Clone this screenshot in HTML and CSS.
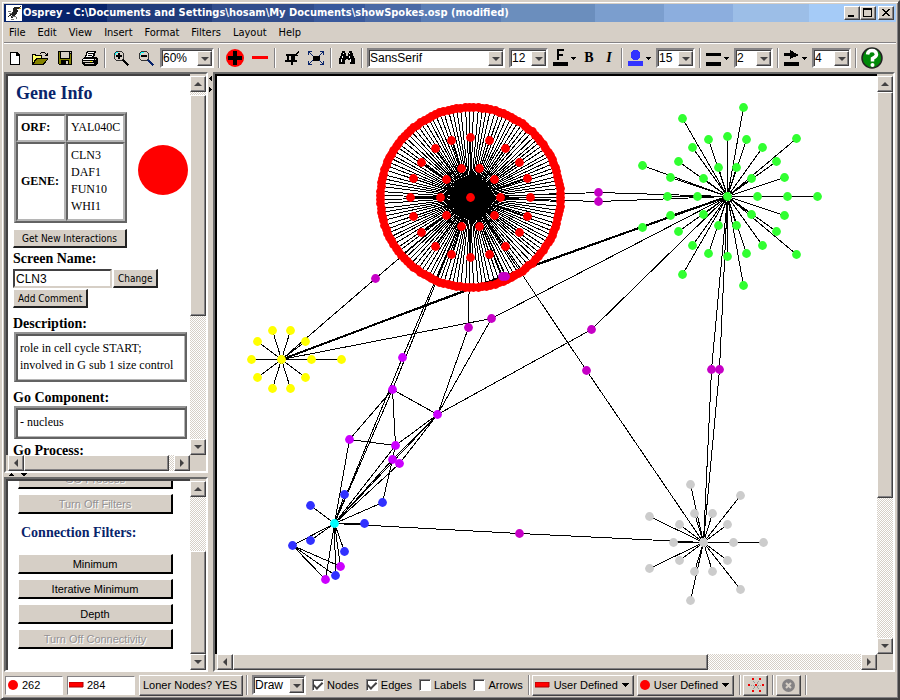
FILE: index.html
```html
<!DOCTYPE html>
<html lang="en">
<head>
<meta charset="utf-8">
<title>Osprey</title>
<link rel="stylesheet" href="styles.css">
</head>
<body>
<div class="window">
  <header class="titlebar">
    <svg class="app-icon" width="16" height="16" viewBox="0 0 16 16" shape-rendering="crispEdges" aria-hidden="true"><path fill="#fff" d="M0 0h16v16H0z"/><path fill="#222" d="M8 2h4l3-1v1l-3 2h-1l1 2-2 4-2 1-1 2H5v-1l1-2-2 1-2 1v-1l3-3 2-1V4z"/><path fill="#777" d="M2 6h3v1H2zM3 8h3v1H3zM6 11h4v1H6zM5 14h3v1H5zM10 12h1v2h-1z"/><path fill="#c90" d="M13 3h2v1h-2z"/></svg>
    <h1>Osprey - C:\Documents and Settings\hosam\My Documents\showSpokes.osp (modified)</h1>
    <div class="window-controls">
      <button type="button" aria-label="Minimize"><svg width="12" height="10" shape-rendering="crispEdges"><path d="M2 7h6v2H2z"/></svg></button>
      <button type="button" aria-label="Maximize"><svg width="12" height="10" shape-rendering="crispEdges"><path fill-rule="evenodd" d="M1 0h9v9H1zM2 2v6h7V2z"/></svg></button>
      <button type="button" aria-label="Close" class="close"><svg width="12" height="10" shape-rendering="crispEdges"><path d="M2 1h2v1h1v1h2V2h1V1h2v1H9v1H8v1H7v1h1v1h1v1h1v1H8V7H7V6H5v1H4v1H2V7h1V6h1V5h1V4H4V3H3V2H2z"/></svg></button>
    </div>
  </header>

  <nav class="menubar">
    <a href="#">File</a><a href="#">Edit</a><a href="#">View</a><a href="#">Insert</a><a href="#">Format</a><a href="#">Filters</a><a href="#">Layout</a><a href="#">Help</a>
  </nav>

  <div class="toolbar">
    <button type="button" class="tool" aria-label="New"><svg width="16" height="16" shape-rendering="crispEdges"><path d="M3 2h7l3 3v10H3z" fill="#000"/><path d="M4 3h5v3h3v8H4z" fill="#fff"/></svg></button>
    <button type="button" class="tool" aria-label="Open"><svg width="16" height="16" shape-rendering="crispEdges"><path d="M9 2h4v1H9zM8 3h1v1H8zM13 3h1v1h1V3h1v3h-3V5h1V4h-1zM0 4h4v1h6v3h6v1l-4 6H0z"/><path fill="#ff6" d="M1 5h2v1h6v2H4l-3 5z"/><path fill="#848200" d="M5 9h10l-4 5H2z"/></svg></button>
    <button type="button" class="tool" aria-label="Save"><svg width="16" height="16" shape-rendering="crispEdges"><path d="M1 1h14v14H2l-1-1z"/><path fill="#848200" d="M2 2h1v7h10V4h1v10h-2v-4H4v4H2z"/><path fill="#d6cfc6" d="M4 2h8v6H4zM13 2h1v1h-1zM9 11h2v3H9z"/></svg></button>
    <button type="button" class="tool" aria-label="Print"><svg width="16" height="16" shape-rendering="crispEdges"><path d="M5 1h9v1l-2 5h2l2 2v4l-3 3H2l-2-3V9l3-2z"/><path fill="#fff" d="M6 2h6l-2 5H4zM1 9h11v1H1z"/><path fill="#000" d="M6 3h5v1H6zM6 5h4v1H6z"/><path fill="#d6cfc6" d="M1 11h10v1H1zM3 13h9v1H3zM13 9h1v1h-1z"/><path fill="#ff0" d="M8 11h2v1H8z"/></svg></button>
    <span class="sep"></span>
    <button type="button" class="tool" aria-label="Zoom in"><svg width="16" height="16" shape-rendering="crispEdges"><circle cx="6" cy="6" r="5" fill="#d6cfc6" stroke="#333" stroke-width="1"/><path d="M5 3h2v2h2v2H7v2H5V7H3V5h2z"/><path d="M10 9l6 5-2 2-5-6z"/><path fill="#0ff" d="M3 2h2v1H3zM2 3h1v2H2z"/></svg></button>
    <button type="button" class="tool" aria-label="Zoom out"><svg width="16" height="16" shape-rendering="crispEdges"><circle cx="6" cy="6" r="5" fill="#d6cfc6" stroke="#333" stroke-width="1"/><path d="M3 5h6v2H3z"/><path fill="#08246b" d="M10 9l6 5-2 2-5-6z"/><path fill="#0ff" d="M3 2h3v1H3zM2 3h1v2H2z"/></svg></button>
    <span class="combo combo-zoom"><select aria-label="Zoom level"><option>60%</option></select><i></i></span>
    <span class="sep"></span>
    <button type="button" class="tool" aria-label="Add"><svg width="18" height="18"><circle cx="9" cy="9" r="9" fill="#f00"/><path d="M7 2h4v5h5v4h-5v5H7v-5H2V7h5z"/></svg></button>
    <button type="button" class="tool" aria-label="Remove"><svg width="16" height="16"><path fill="#f00" d="M0 6h16v3H0z"/></svg></button>
    <span class="sep"></span>
    <button type="button" class="tool" aria-label="Crop"><svg width="16" height="16" shape-rendering="crispEdges"><path d="M4 4h8l3-3 1 1-3 3h2v1h-3v4h2v2h-4v3H8v-3H2v-2h2V6H3V4zM6 6v4h2V6z" fill-rule="evenodd"/></svg></button>
    <button type="button" class="tool" aria-label="Fit to window"><svg width="16" height="16" shape-rendering="crispEdges"><path d="M5 6h7v5H5z"/><path fill="#08246b" d="M0 1h4v1H2v1h1v1h1v1h1v1H4V5H3V4H2V3H1v2H0zM16 1h-4v1h2v1h-1v1h-1v1h-1v1h1V5h1V4h1V3h1v2h1zM0 15h4v-1H2v-1h1v-1h1v-1h1v-1H4v1H3v1H2v1H1v-2H0zM16 15h-4v-1h2v-1h-1v-1h-1v-1h-1v-1h1v1h1v1h1v1h1v-2h1z"/></svg></button>
    <span class="sep"></span>
    <button type="button" class="tool" aria-label="Find"><svg width="16" height="16" shape-rendering="crispEdges"><path d="M3 1h3v2h1v3h2V3h1V1h3v2h1v3h1v2h1v6h-5v-4H9V9H7v1H6v4H0V8h1V6h1V3h1z"/><path fill="#fff" d="M4 3h1v1H4zM3 6h1v2H3zM2 9h1v3H2zM10 3h1v1h-1zM10 6h1v2h-1zM11 9h1v3h-1z"/></svg></button>
    <span class="sep"></span>
    <span class="combo combo-font"><select aria-label="Font"><option>SansSerif</option></select><i></i></span>
    <span class="combo combo-size"><select aria-label="Font size"><option>12</option></select><i></i></span>
    <button type="button" class="tool drop" aria-label="Font colour"><svg width="24" height="18" shape-rendering="crispEdges"><path d="M4 0h7v2H6v3h4v2H6v4H4zM0 13h15v4H0zM18 8h5v1h-1v1h-1v1h-1v-1h-1V9h-1z"/></svg></button>
    <button type="button" class="tool letter bold">B</button>
    <button type="button" class="tool letter italic">I</button>
    <span class="sep"></span>
    <button type="button" class="tool drop" aria-label="Node colour"><svg width="24" height="18" shape-rendering="crispEdges"><circle cx="7.5" cy="6" r="5" fill="#33f"/><path fill="#33f" d="M0 12h15v5H0z"/><path d="M18 8h5v1h-1v1h-1v1h-1v-1h-1V9h-1z"/></svg></button>
    <span class="combo combo-size"><select aria-label="Node size"><option>15</option></select><i></i></span>
    <span class="sep"></span>
    <button type="button" class="tool drop" aria-label="Edge colour"><svg width="24" height="18" shape-rendering="crispEdges"><path d="M0 4h15v3H0zM0 13h15v4H0zM18 8h5v1h-1v1h-1v1h-1v-1h-1V9h-1z"/></svg></button>
    <span class="combo combo-size"><select aria-label="Edge width"><option>2</option></select><i></i></span>
    <span class="sep"></span>
    <button type="button" class="tool drop" aria-label="Arrow colour"><svg width="24" height="18" shape-rendering="crispEdges"><path d="M0 4h6V1l9 5-9 4V7H0zM0 13h15v4H0zM18 8h5v1h-1v1h-1v1h-1v-1h-1V9h-1z"/></svg></button>
    <span class="combo combo-size"><select aria-label="Arrow size"><option>4</option></select><i></i></span>
    <span class="sep"></span>
    <button type="button" class="tool" aria-label="Help"><svg width="22" height="22"><circle cx="11" cy="11" r="10" fill="#008a08" stroke="#222" stroke-width="1.5"/><path d="M6.500 7.500Q7 3.500 11 3.500T15.500 7.500Q15.500 9.500 11.500 11.500V14.500" fill="none" stroke="#fff" stroke-width="3.500"/><circle cx="11.500" cy="18" r="2" fill="#fff"/></svg></button>
  </div>

  <main class="workspace">
    <div class="sidebar">
      <section class="panel split-both">
        <div class="view gene">
          <h2>Gene Info</h2>
          <div class="gene-row">
            <table>
              <tr><th scope="row">ORF:</th><td>YAL040C</td></tr>
              <tr><th scope="row">GENE:</th><td>CLN3<br>DAF1<br>FUN10<br>WHI1</td></tr>
            </table>
            <svg width="50" height="50"><circle cx="25" cy="25" r="25" fill="#f00"/></svg>
          </div>
          <button type="button" class="form-button wide">Get New Interactions</button>
          <label class="caption" for="screen-name">Screen Name:</label>
          <div class="name-row"><input id="screen-name" type="text" value="CLN3"><button type="button" class="form-button">Change</button></div>
          <button type="button" class="form-button">Add Comment</button>
          <h3>Description:</h3>
          <p class="framed">role in cell cycle START; involved in G sub 1 size control</p>
          <h3>Go Component:</h3>
          <p class="framed">- nucleus</p>
          <h3 class="last">Go Process:</h3>
        </div>
        <div class="scroll vertical"><b class="up"></b><span class="track t-gene-a"></span><span class="thumb t-gene-b"></span><span class="track t-gene-c"></span><b class="down"></b></div>
        <div class="scroll horizontal"><b class="left"></b><span class="thumb t-geneh-a"></span><span class="track t-geneh-b"></span><b class="right"></b></div>
      </section>
      <div class="divider-h"><svg width="24" height="4" shape-rendering="crispEdges"><path d="M6 0h1v1h1v1h1v1H4V2h1V1h1zM16 0h6v1h-1v1h-1v1h-2V2h-1V1h-1z"/></svg></div>
      <section class="panel">
        <div class="view filters">
          <button type="button" disabled>GO Process</button>
          <button type="button" disabled>Turn Off Filters</button>
          <h3>Connection Filters:</h3>
          <button type="button">Minimum</button>
          <button type="button">Iterative Minimum</button>
          <button type="button">Depth</button>
          <button type="button" disabled>Turn Off Connectivity</button>
        </div>
        <div class="scroll vertical"><b class="up"></b><span class="track t-filt-a"></span><span class="thumb t-filt-b"></span><b class="down"></b></div>
      </section>
    </div>
    <div class="divider-v"><svg width="5" height="24" shape-rendering="crispEdges"><path d="M4 4v5H3V8H2V7H1V6h1V5h1V4zM1 15h1v1h1v1h1v1H3v1H2v1H1z"/></svg></div>
    <section class="panel split-both network">
      <div class="view"><svg id="graph" role="img" aria-label="Gene interaction network"></svg></div>
      <div class="scroll vertical"><b class="up"></b><span class="thumb t-net-a"></span><span class="track t-net-b"></span><b class="down"></b></div>
      <div class="scroll horizontal"><b class="left"></b><span class="thumb t-neth-a"></span><span class="track t-neth-b"></span><b class="right"></b></div>
    </section>
  </main>

  <footer class="statusbar">
    <output class="count count-nodes"><svg width="12" height="10"><circle cx="6" cy="5" r="5" fill="#f00"/></svg>262</output>
    <output class="count count-edges"><svg width="15" height="6"><path fill="#f00" stroke="#a00" d="M0 0h14v5H0z"/></svg>284</output>
    <button type="button" class="push loner">Loner Nodes? YES</button>
    <span class="sep"></span>
    <span class="combo combo-draw"><select aria-label="Draw mode"><option>Draw</option></select><i></i></span>
    <label class="check"><input type="checkbox" checked>Nodes</label>
    <label class="check"><input type="checkbox" checked>Edges</label>
    <label class="check"><input type="checkbox">Labels</label>
    <label class="check"><input type="checkbox">Arrows</label>
    <span class="sep"></span>
    <button type="button" class="push"><svg width="15" height="6"><path fill="#f00" stroke="#a00" d="M0 0h14v5H0z"/></svg>User Defined<svg width="7" height="4" shape-rendering="crispEdges"><path d="M0 0h7L4 4H3z"/></svg></button>
    <button type="button" class="push"><svg width="10" height="10"><circle cx="5" cy="5" r="5" fill="#f00"/></svg>User Defined<svg width="7" height="4" shape-rendering="crispEdges"><path d="M0 0h7L4 4H3z"/></svg></button>
    <span class="sep"></span>
    <button type="button" class="push square" aria-label="Layout"><svg width="16" height="14" shape-rendering="crispEdges"><path stroke="#999" stroke-dasharray="1 1" d="M8 7L5 2M8 7l4-5M8 7H2M8 7h6M8 7l-4 5M8 7l4 5"/><path fill="#e00" d="M4 0h2v2H4zM11 0h2v2h-2zM0 6h2v2H0zM7 6h2v2H7zM14 6h2v2h-2zM4 12h2v2H4zM11 12h2v2h-2z"/></svg></button>
    <span class="sep"></span>
    <button type="button" class="push square" aria-label="Stop" disabled><svg width="13" height="13"><circle cx="6.500" cy="6.500" r="6.500" fill="#848284"/><path stroke="#d6cfc6" stroke-width="2" d="M4 4l5 5M9 4l-5 5"/></svg></button>
    <span class="sep"></span>
  </footer>
</div>
<script src="graph.js"></script>
</body>
</html>
```
FILE: styles.css
```css
:root {
  --face: #d6cfc6;
  --shade: #848284;
  --dark: #424142;
  --navy: #08246b;
  --ui: "Liberation Sans", Arial, sans-serif;
  --menu: "DejaVu Sans Condensed", "Noto Sans", sans-serif;
}

* { box-sizing: border-box; }

body {
  margin: 0;
  background: var(--face);
  color: #000;
  font: 11px/14px var(--ui);
}

button, select, input { font: inherit; color: inherit; border-radius: 0; margin: 0; padding: 0; }
h1, h2, h3, p { margin: 0; }
svg { display: block; flex: none; }

.window {
  display: flex;
  flex-direction: column;
  height: 100vh;
  min-height: 480px;
  padding: 2px 2px 0;
  background: var(--face);
  border: solid;
  border-width: 2px;
  border-color: var(--face) var(--dark) var(--dark) var(--face);
  box-shadow: inset 1px 1px #fff, inset -1px -1px var(--shade);
}

/* Title bar */
.titlebar {
  display: flex;
  align-items: center;
  flex: none;
  height: 18px;
  padding: 0 2px;
  background: linear-gradient(90deg, #08246b 0 11.500%, #213c7b 0 23.300%, #314d8c 0 34.700%, #39599c 0 40.500%, #4a69a5 0 46.800%, #5a7db5 0 55.700%, #6b8ebd 0 66.300%, #7b9ece 0 74%, #8caede 0 81.700%, #9cbee7 0 90.300%, #a5cbf7 0);
  color: #fff;
}
.titlebar h1 { flex: 1; margin-left: 1px; font: bold 11px/18px var(--menu); white-space: nowrap; overflow: hidden; }
.window-controls { display: flex; }
.window-controls button { width: 16px; height: 14px; display: grid; place-items: center; }
.window-controls .close { margin-left: 2px; }

.window-controls button, .push, .scroll b, .thumb, .combo i {
  background: var(--face);
  border: 1px solid;
  border-color: #fff var(--dark) var(--dark) #fff;
  box-shadow: inset -1px -1px var(--shade);
  color: #000;
}

/* Menu */
.menubar {
  display: flex;
  align-items: center;
  flex: none;
  gap: 12px;
  height: 22px;
  padding: 0 5px;
  border-bottom: 1px solid #fff;
  box-shadow: inset 0 -1px var(--shade);
  font: 11px/20px var(--menu);
}
.menubar a { color: #000; text-decoration: none; }

/* Toolbar */
.toolbar { display: flex; align-items: center; flex: none; height: 28px; margin-left: -2px; }
.tool { flex: none; display: grid; place-items: center; width: 25px; height: 24px; border: 0; background: none; }
.tool.drop { width: 29px; }
.tool.letter { width: 20px; font: bold 14px/20px "Liberation Serif", serif; }
.tool.italic { font-style: italic; }
.sep { flex: none; width: 2px; height: 20px; margin: 0 2px; background: var(--shade); border-right: 1px solid #fff; }

.combo {
  flex: none;
  display: grid;
  grid-template: 1fr / 1fr;
  height: 20px;
  margin: 0 2px;
  background: #fff;
  border: 2px solid;
  border-color: var(--shade) #fff #fff var(--shade);
  box-shadow: inset 1px 1px var(--dark);
}
.combo select { grid-area: 1 / 1; width: 100%; padding-left: 1px; appearance: none; background: none; border: 0; outline: 0; font: 12px/16px var(--ui); }
.combo i { grid-area: 1 / 1; justify-self: end; width: 15px; margin: 1px 0 0; pointer-events: none; display: grid; place-items: center; }
.combo i::before { content: ""; border: 4px solid transparent; border-top-color: var(--dark); border-bottom: 0; }
.combo-zoom { width: 54px; }
.combo-font { width: 138px; }
.combo-size { width: 39px; }
.combo-draw { width: 54px; }

/* Workspace */
.workspace { flex: 1; min-height: 0; display: flex; }
.sidebar { flex: none; width: 204px; display: grid; grid-template-rows: minmax(0, 401fr) 4px minmax(0, 195fr); }
.divider-v { flex: none; width: 5px; }
.divider-h { padding-left: 1px; }

.panel {
  display: grid;
  grid-template: minmax(0, 1fr) / minmax(0, 1fr) 16px;
  min-height: 0;
  border: 2px solid;
  border-color: #6b6b6b #fff #fff #6b6b6b;
}
.panel.split-both { grid-template-rows: minmax(0, 1fr) 16px; }
.view { overflow: hidden; background: #fff; }
.panel > .view { border: 2px solid var(--dark); border-width: 2px 0 0 2px; }
.network { flex: 1; min-width: 0; margin-right: 1px; }
.network > .view { border-color: #000; }
#graph { width: 100%; height: 100%; }

/* Scroll bars */
.scroll { display: flex; min-width: 0; min-height: 0; }
.vertical { flex-direction: column; padding-top: 2px; }
.horizontal { padding-left: 2px; }
.scroll b { flex: none; width: 16px; height: 16px; display: grid; place-items: center; }
.scroll b::before { content: ""; border: 4px solid transparent; }
.scroll .up::before { border-top: 0; border-bottom-color: var(--dark); }
.scroll .down::before { border-bottom: 0; border-top-color: var(--dark); }
.scroll .left::before { border-left: 0; border-right-color: var(--dark); }
.scroll .right::before { border-right: 0; border-left-color: var(--dark); }
.track { background: conic-gradient(#fff 25%, var(--face) 0 50%, #fff 0 75%, var(--face) 0) 0 0 / 2px 2px; }
.t-gene-a { flex: 3; }
.t-gene-b { flex: 220; }
.t-gene-c { flex: 124; }
.t-geneh-a { flex: 145; }
.t-geneh-b { flex: 5; }
.t-filt-a { flex: 55; }
.t-filt-b { flex: 102; }
.t-net-a { flex: 405; }
.t-net-b { flex: 141; }
.t-neth-a { flex: 475; }
.t-neth-b { flex: 154; }

/* Gene details */
.gene { padding: 7px 0 0 5px; font: 12px/18px "Liberation Serif", "Times New Roman", serif; }
.gene h2 { margin-left: 3px; color: var(--navy); font-size: 18px; line-height: 20px; }
.gene-row { display: flex; align-items: center; gap: 11px; margin: 9px 0 6px 1px; }
.gene-row svg { margin-top: 4px; }
.gene table { border: 2px solid; border-color: #a5a5a5 #636363 #636363 #a5a5a5; border-spacing: 0; }
.gene th, .gene td { padding: 3px 3px 4px; border: 2px solid; border-color: #636363 #b5b5b5 #b5b5b5 #636363; text-align: left; line-height: 17px; }
.gene th { padding-right: 5px; font-size: 12px; }
.gene h3, .caption { display: block; font-size: 14px; font-weight: bold; line-height: 17px; }
.caption { margin: 2px 0; }
.gene h3 { margin-top: 7px; }
.gene h3.last { margin-top: 3px; }
.form-button {
  display: block;
  height: 19px;
  padding: 0 4px;
  border: solid;
  border-width: 1px 2px 2px 1px;
  border-color: #fff #222 #222 #fff;
  background: var(--face);
  font: 10px/15px var(--menu);
}
.form-button.wide { padding: 0 8px; }
.name-row { display: flex; gap: 1px; align-items: center; margin-bottom: 1px; }
.name-row input { width: 99px; height: 19px; padding: 0 1px; border: 2px solid; border-color: var(--dark) var(--face) var(--face) var(--dark); background: #fff; font: 12px/15px var(--ui); }
.framed { width: 173px; margin-left: 1px; padding: 6px 2px 6px 4px; border: 2px solid; border-color: #949494 #636363 #636363 #949494; box-shadow: inset 2px 2px #5a5a5a, inset -1px -1px #b5b5b5; line-height: 17px; }

/* Filters */
.filters { display: flex; flex-direction: column; justify-content: flex-end; gap: 5px; padding: 0 17px 21px 10px; }
.filters button {
  flex: none;
  height: 20px;
  border: solid;
  border-width: 1px 2px 2px 1px;
  border-color: #fff #000 #000 #fff;
  background: var(--face);
  font: 11px/16px var(--ui);
}
.filters button:disabled { color: #949294; text-shadow: 1px 1px #fff; }
.filters h3 { margin: 4px 0 6px 3px; color: var(--navy); font: bold 14px/20px "Liberation Serif", serif; }

/* Status bar */
.statusbar { display: flex; align-items: center; flex: none; height: 26px; padding-left: 1px; }
.count { display: flex; align-items: center; gap: 3px; height: 19px; margin-right: 4px; padding-left: 1px; background: #fff; border: 1px solid; border-color: var(--shade) #fff #fff var(--shade); }
.count-nodes { width: 58px; }
.count-edges { width: 68px; }
.push { flex: none; display: flex; align-items: center; justify-content: center; gap: 4px; height: 21px; margin-right: 3px; padding: 0 4px 0 2px; }
.push.loner { width: 104px; margin-right: 1px; }
.push.square { width: 25px; padding: 0; margin-right: 2px; }
.check { display: flex; align-items: center; gap: 3px; margin: 0 3px 0 4px; }
.check input { width: 12px; height: 12px; appearance: none; display: grid; place-items: center; background: #fff; border: 1px solid; border-color: var(--shade) #fff #fff var(--shade); box-shadow: inset 1px 1px var(--dark); }
.check input:checked::before { content: ""; width: 4px; height: 7px; border: solid var(--dark); border-width: 0 2px 2px 0; transform: rotate(45deg); margin-bottom: 2px; }
```
FILE: graph.js
```js
const NS = "http://www.w3.org/2000/svg";
const svg = document.getElementById("graph");
const layer = document.createElementNS(NS, "g");
layer.setAttribute("transform", "translate(-216.5 -75.5)");
svg.append(layer);

const colours = { red: "#ff0000", green: "#31ff31", yellow: "#ffff00", grey: "#cccccc", blue: "#3131ff", cyan: "#00ffff", magenta: "#cc00ff", plum: "#c600c6" };

function line(a, b, width = 1) {
  const el = document.createElementNS(NS, "path");
  el.setAttribute("d", `M${a[0]} ${a[1]}L${b[0]} ${b[1]}`);
  el.setAttribute("stroke", "#000");
  el.setAttribute("stroke-width", width);
  el.setAttribute("shape-rendering", "crispEdges");
  layer.append(el);
}

function node(p, colour) {
  const el = document.createElementNS(NS, "circle");
  el.setAttribute("cx", p[0]);
  el.setAttribute("cy", p[1]);
  el.setAttribute("r", 4.4);
  el.setAttribute("fill", colours[colour]);
  layer.append(el);
}

// Nodes evenly spaced on a circle around a hub.
function ring(hub, radius, count) {
  return Array.from({ length: count }, (_, i) => {
    const t = (i * 2 * Math.PI) / count;
    return [Math.round(hub[0] + radius * Math.cos(t)), Math.round(hub[1] - radius * Math.sin(t))];
  });
}

const R = [470, 197], G = [727, 196], Y = [281, 359], B = [334, 523], W = [703, 542];
const hubs = [
  { at: R, colour: "red", nodes: [...ring(R, 90, 131), ...ring(R, 60, 20), ...ring(R, 30, 10)] },
  { at: G, colour: "green", nodes: [...ring(G, 90, 9), ...ring(G, 60, 20), ...ring(G, 30, 10)] },
  { at: Y, colour: "yellow", nodes: [...ring(Y, 30, 10), [341, 359]] },
  { at: W, colour: "grey", nodes: [...ring(W, 60, 7), ...ring(W, 30, 10)] },
  { at: B, colour: "blue", nodes: [[310, 505], [344, 494], [382, 502], [364, 523], [310, 540], [292, 545], [344, 551], [335, 575]] },
];

const n = {
  a: [375, 278], b: [598, 192], c: [598, 201], d: [468, 327], e: [491, 318], f: [402, 357],
  g: [392, 389], h: [437, 414], i: [349, 439], j: [395, 445], k: [392, 459], l: [399, 463],
  m: [340, 566], o: [325, 579], p: [591, 329], q: [586, 370], r: [711, 369], s: [719, 369],
  t: [519, 533], u: [502, 276], v: [505, 276],
};
const links = [
  [R, n.a], [n.a, Y], [R, n.b], [n.b, G], [R, n.c], [n.c, G], [R, n.d], [n.d, n.h],
  [G, n.e], [n.e, Y], [n.e, n.h], [R, n.f], [n.f, B], [R, n.g], [n.g, B], [n.g, n.h],
  [n.g, n.i], [n.g, n.j], [n.i, n.j], [n.i, B], [n.j, n.h], [n.j, B], [n.j, n.k],
  [n.k, n.h], [n.k, B], [n.k, [382, 502]], [n.l, n.h], [n.l, B], [n.h, B], [n.p, G],
  [n.p, n.h], [R, n.q], [n.q, W], [G, n.r], [n.r, W], [G, n.s], [n.s, W], [B, n.t],
  [n.t, W], [G, n.u, 2], [n.u, Y, 2], [G, n.v], [n.v, Y], [R, n.u], [R, n.v],
  [[292, 545], n.m], [[292, 545], [335, 575]], [[292, 545], n.o], [B, n.m], [B, n.o],
];

hubs.forEach(hub => hub.nodes.forEach(p => line(hub.at, p)));
links.forEach(([a, b, width]) => line(a, b, width));
hubs.forEach(hub => {
  hub.nodes.forEach(p => node(p, hub.colour));
  node(hub.at, hub.colour === "blue" ? "cyan" : hub.colour);
});
Object.entries(n).forEach(([key, p]) => node(p, "fghijklmo".includes(key) ? "magenta" : "plum"));
```
